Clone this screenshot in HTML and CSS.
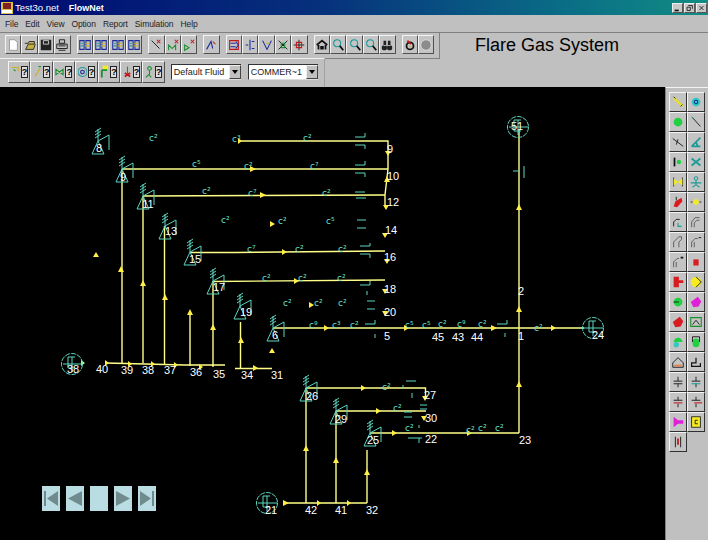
FILE: index.html
```html
<!DOCTYPE html>
<html lang="en">
<head>
<meta charset="utf-8">
<title>Flare Gas System</title>
<link rel="stylesheet" href="styles.css">
</head>
<body>
<div class="app">
  <header class="titlebar">
    <svg class="app-icon" viewBox="0 0 12 12"><rect width="12" height="12" fill="#d8c040"/><rect x="2" y="1" width="8" height="6" fill="#802020"/><rect x="1" y="8" width="10" height="3" fill="#fff"/></svg>
    <span class="doc-name">Test3o.net</span><span class="app-name">FlowNet</span>
    <div class="win-btns">
      <span class="win-btn"><svg viewBox="0 0 11 9"><path class="k2" d="M2 7.500h5"/></svg></span>
      <span class="win-btn"><svg viewBox="0 0 11 9"><path class="k1" d="M4 1.500h5v4M2.500 3.500h4v4h-4z"/></svg></span>
      <span class="win-btn"><svg viewBox="0 0 11 9"><path class="k1" d="M3 2l5 5M8 2l-5 5"/></svg></span>
    </div>
  </header>
  <nav class="menubar">
    <span>File</span><span>Edit</span><span>View</span><span>Option</span><span>Report</span><span>Simulation</span><span>Help</span>
  </nav>
  <div class="row-one">
    <div class="toolbar">
      <div class="tb-group">
        <span class="tb"><svg viewBox="0 0 16 16"><path class="paper" d="M4 2h6l3 3v9H4z"/></svg></span>
        <span class="tb"><svg viewBox="0 0 16 16"><path class="folder" d="M2 6h4l1-2h6v3H6l-3 6h9l2-6"/></svg></span>
        <span class="tb"><svg viewBox="0 0 16 16"><path class="disk" d="M2 2h12v12H2z"/><path class="w" d="M5 3h6v4H5z"/></svg></span>
        <span class="tb"><svg viewBox="0 0 16 16"><path class="k1" d="M5 2h6v4H5zM2 7h12v5H2zM4 14h8M4 9h8"/></svg></span>
      </div>
      <div class="tb-group">
        <span class="tb"><svg viewBox="0 0 16 16"><use href="#book"/></svg></span>
        <span class="tb"><svg viewBox="0 0 16 16"><use href="#book"/></svg></span>
        <span class="tb"><svg viewBox="0 0 16 16"><use href="#book"/></svg></span>
        <span class="tb"><svg viewBox="0 0 16 16"><use href="#book"/></svg></span>
      </div>
      <div class="tb-group">
        <span class="tb"><svg viewBox="0 0 16 16"><path class="k1" d="M3 3l9 9"/><path class="r1" d="M9 2l4 4M13 2L9 6"/></svg></span>
        <span class="tb"><svg viewBox="0 0 16 16"><path class="g1" d="M3 14V8l4 4 4-4v6"/><path class="r1" d="M10 2l4 4M14 2l-4 4"/></svg></span>
        <span class="tb"><svg viewBox="0 0 16 16"><path class="g1" d="M3 8v6l5-3z"/><path class="r1" d="M10 2l4 4M14 2l-4 4"/></svg></span>
      </div>
      <div class="tb-group">
        <span class="tb"><svg viewBox="0 0 16 16"><path class="b1" d="M3 13L8 4l2 8"/><path class="r1" d="M10 4l3 3"/></svg></span>
      </div>
      <div class="tb-group">
        <span class="tb"><svg viewBox="0 0 16 16"><path class="r1" d="M3 3h10v10H3z"/><path class="b1" d="M4 6h6M4 10h6M10 4l3 4-3 4"/></svg></span>
        <span class="tb"><svg viewBox="0 0 16 16"><path class="b1" d="M8 2v12M3 8h3M10 4h3M10 12h3"/></svg></span>
        <span class="tb"><svg viewBox="0 0 16 16"><path class="b1" d="M3 3l5 10 5-10"/><path class="y1" d="M7 6h4"/></svg></span>
        <span class="tb"><svg viewBox="0 0 16 16"><path class="k1" d="M3 3l10 10M13 3L3 13"/><path class="g1" d="M6 6h4v5H6z"/></svg></span>
        <span class="tb"><svg viewBox="0 0 16 16"><path class="k1" d="M8 2v12M2 8h12"/><path class="r1" d="M5 5h6v6H5z"/></svg></span>
      </div>
      <div class="tb-group">
        <span class="tb"><svg viewBox="0 0 16 16"><path class="k2" d="M2 8l6-5 6 5M4 13V8M12 13V8M7 13v-3h2v3"/></svg></span>
        <span class="tb"><svg viewBox="0 0 16 16"><use href="#lens"/></svg></span>
        <span class="tb"><svg viewBox="0 0 16 16"><use href="#lens"/></svg></span>
        <span class="tb"><svg viewBox="0 0 16 16"><use href="#lens"/></svg></span>
        <span class="tb"><svg viewBox="0 0 16 16"><path class="disk" d="M2 11a3 3 0 1 0 6 0 3 3 0 1 0-6 0zM8 11a3 3 0 1 0 6 0 3 3 0 1 0-6 0zM4 3h3v6H4zM9 3h3v6H9z"/></svg></span>
      </div>
      <div class="tb-group">
        <span class="tb"><svg viewBox="0 0 16 16"><circle class="k2" cx="8" cy="9" r="4"/><path class="r2" d="M5 3l4 4"/><path class="y1" d="M7 10h3"/></svg></span>
        <span class="tb"><svg viewBox="0 0 16 16"><circle class="grey-dot" cx="8" cy="8" r="6"/></svg></span>
      </div>
    </div>
    <h1 class="doc-title">Flare Gas System</h1>
  </div>
  <div class="row-two">
    <div class="toolbar-two">
      <span class="tb2"><svg viewBox="0 0 10 16"><path class="y1" d="M1 3h7v4"/><path class="g1" d="M3 5l2 2"/></svg><b>?</b></span>
      <span class="tb2"><svg viewBox="0 0 10 16"><path class="y1" d="M2 13L8 4"/><path class="g1" d="M6 2h3"/></svg><b>?</b></span>
      <span class="tb2"><svg viewBox="0 0 10 16"><path class="g1" d="M1 5v6l8-6v6z"/></svg><b>?</b></span>
      <span class="tb2"><svg viewBox="0 0 10 16"><circle class="t1" cx="5" cy="8" r="5"/><circle class="b1" cx="5" cy="8" r="2"/></svg><b>?</b></span>
      <span class="tb2"><svg viewBox="0 0 10 16"><path class="fill-y" d="M3 1h6v5H3z"/><path class="g2" d="M2 6h6M2 6v8"/></svg><b>?</b></span>
      <span class="tb2"><svg viewBox="0 0 10 16"><path class="r2" d="M2 13l6-4M2 9l6 4"/><path class="g1" d="M5 2v8"/></svg><b>?</b></span>
      <span class="tb2"><svg viewBox="0 0 10 16"><circle class="g1" cx="5" cy="4" r="2"/><path class="g1" d="M5 6v5M1 14l3-3 3 3"/></svg><b>?</b></span>
      <div class="combo combo-first"><span class="combo-text">Default Fluid</span><span class="combo-arrow"></span></div>
      <div class="combo"><span class="combo-text">COMMER~1</span><span class="combo-arrow"></span></div>
    </div>
  </div>
  <main class="workspace">
    <div class="canvas">
      <svg class="flow" viewBox="0 87 664 453" aria-label="Flare gas network diagram">
        <defs>
          <g id="book"><path class="b1" d="M2 3h5v10H2zM9 3h5v10H9z"/><path class="y1" d="M8 6h5M8 9h5"/><path class="t1" d="M3 6h3M3 9h3"/></g>
          <g id="lens"><circle class="t1" cx="7" cy="6" r="4"/><path class="k2" d="M10 9l4 5"/></g>
          <g id="flare"><path d="M0 0L-6 13H6ZM0 0L11-6V9M0 0V-12M-3-9L3-13M-3-6L3-10M-3-3L3-7"/></g>
          <g id="tank"><circle r="10.500" stroke-dasharray="5 1"/><path d="M3-7H-4V4H3M-9 0H10M0-7V8"/></g>
        </defs>
        <g class="pipes">
          <path d="M240 141H388V169L385 195V207"/>
          <path d="M122 169H388M143 196L385 195M190 252.500H236L385 251M213 281.500L385 280"/>
          <path d="M122 169V363M143 196V363M164.500 226V364M190 311V366M213 281V367M240.500 322V368"/>
          <path d="M106 363L184 365H225M235 368.500H272"/>
          <path d="M273 328H584M519 130V433"/>
          <path d="M306 388H425.500V397M336 411H426M370 433H519"/>
          <path d="M306 388V503M336 411V503M367 450V503M283 503H367"/>
        </g>
        <path class="marks" d="M250 166l6 3-6 3zM260 192l6 3-6 3zM238 138l4 3-4 3zM282 249l5 3-5 3zM294 278l5 3-5 3zM324 325l5 3-5 3zM404 325l5 3-5 3zM491 325l6 3-6 3zM551 325l5 3-5 3zM361 385l5 3-5 3zM376 408l5 3-5 3zM392 430l5 3-5 3zM467 430l5 3-5 3zM283 500l6 3-6 3zM317 500l4 3-4 3zM347 500l4 3-4 3zM105 360l4 3-4 3zM128 361l4 3-4 3zM151 361l4 3-4 3zM174 362l4 3-4 3zM199 364l4 3-4 3zM253 365l5 3-5 3zM81 360l4 3-4 3zM270 221l5 3-5 3zM309 302l5 3-5 3z"/>
        <path class="marks" d="M118 272l3-6 3 6zM140 286l3-6 3 6zM162 300l3-6 3 6zM187 315l3-6 3 6zM210 330l3-6 3 6zM238 343l3-6 3 6zM93 257l3-5 3 5zM269 353l3-5 3 5zM516 210l3-6 3 6zM516 312l3-6 3 6zM516 387l3-6 3 6zM303 451l3-6 3 6zM333 463l3-6 3 6zM364 475l3-6 3 6zM384 182l3-6 3 6z"/>
        <path class="marks" d="M385 151h6l-3 5zM383 205h6l-3 5zM382 233h6l-3 5zM384 259h6l-3 5zM382 289h6l-3 5zM382 311h6l-3 5zM422 396h6l-3 5zM421 416h6l-3 5z"/>
        <g class="teal">
          <use href="#flare" x="98" y="141"/><use href="#flare" x="122" y="169"/><use href="#flare" x="143" y="196"/><use href="#flare" x="165" y="226"/><use href="#flare" x="190" y="252"/><use href="#flare" x="213" y="281"/><use href="#flare" x="240" y="306"/><use href="#flare" x="273" y="328"/><use href="#flare" x="306" y="388"/><use href="#flare" x="336" y="411"/><use href="#flare" x="370" y="433"/>
          <use href="#tank" x="518" y="127"/><use href="#tank" x="72" y="364"/><use href="#tank" x="593" y="328"/><use href="#tank" x="267" y="503"/>
          <path d="M355 137H365V133M355 145H365V149M355 165H365V161M355 173H365V177M355 192H365M356 198H366M357 220H366M357 228H366M360 246H370V243M360 254H370V258M360 285H370V281M367 291V295M367 301H375M367 309H375M365 324H375V320M375 334V338M497 324H507V320M505 333V337M513 171H519M524 166V178M412 398V393M404 412H412M404 417H412M406 381H416M420 409H427M420 405H427M408 438H422M419 425V428M419 438V443M403 385V389"/>
        </g>
        <g class="tags">
          <text x="149" y="141">c²</text><text x="192" y="167">c⁵</text><text x="202" y="194">c²</text><text x="221" y="223">c²</text><text x="232" y="142">c³</text><text x="303" y="141">c²</text>
          <text x="244" y="169">c²</text><text x="310" y="169">c⁷</text><text x="248" y="196">c⁷</text><text x="322" y="196">c²</text><text x="278" y="224">c²</text><text x="326" y="224">c⁵</text>
          <text x="247" y="252">c⁷</text><text x="295" y="252">c²</text><text x="338" y="252">c²</text><text x="262" y="281">c²</text><text x="298" y="281">c²</text><text x="337" y="281">c²</text>
          <text x="283" y="306">c²</text><text x="314" y="306">c²</text><text x="338" y="306">c²</text><text x="309" y="328">c⁹</text><text x="332" y="328">c³</text><text x="350" y="328">c²</text>
          <text x="405" y="328">c⁵</text><text x="422" y="328">c⁵</text><text x="438" y="327">c²</text><text x="457" y="327">c⁹</text><text x="478" y="327">c²</text><text x="534" y="331">c²</text>
          <text x="382" y="390">c²</text><text x="393" y="411">c²</text><text x="405" y="431">c²</text><text x="466" y="433">c²</text><text x="478" y="431">c²</text><text x="495" y="431">c²</text>
        </g>
        <g class="labels">
          <text x="390" y="153">9</text><text x="393" y="180">10</text><text x="393" y="206">12</text><text x="391" y="234">14</text><text x="390" y="261">16</text><text x="390" y="293">18</text><text x="390" y="316">20</text><text x="387" y="340">5</text>
          <text x="438" y="341">45</text><text x="458" y="341">43</text><text x="477" y="341">44</text><text x="521" y="340">1</text><text x="521" y="295">2</text><text x="598" y="339">24</text><text x="525" y="444">23</text><text x="431" y="443">22</text><text x="430" y="399">27</text><text x="431" y="422">30</text>
          <text x="277" y="379">31</text><text x="247" y="379">34</text><text x="219" y="378">35</text><text x="196" y="376">36</text><text x="170" y="374">37</text><text x="148" y="374">38</text><text x="127" y="374">39</text><text x="102" y="373">40</text>
          <text x="311" y="514">42</text><text x="341" y="514">41</text><text x="372" y="514">32</text>
          <text x="99" y="152">8</text><text x="123" y="181">9</text><text x="148" y="208">11</text><text x="171" y="235">13</text><text x="195" y="263">15</text><text x="219" y="291">17</text><text x="246" y="316">19</text><text x="275" y="339">6</text><text x="312" y="400">26</text><text x="341" y="423">29</text><text x="373" y="444">25</text>
          <text x="517" y="130">51</text><text x="73" y="373">38</text><text x="271" y="514">21</text>
        </g>
      </svg>
      <div class="player">
        <span class="nav"><svg viewBox="0 0 18 25"><path class="nav-ink" d="M2 5h2v15H2zM16 5v15L5 12.500z"/></svg></span>
        <span class="nav"><svg viewBox="0 0 18 25"><path class="nav-ink" d="M16 5v15L2 12.500z"/></svg></span>
        <span class="nav"></span>
        <span class="nav"><svg viewBox="0 0 18 25"><path class="nav-ink" d="M2 5v15l14-7.500z"/></svg></span>
        <span class="nav"><svg viewBox="0 0 18 25"><path class="nav-ink" d="M14 5h2v15h-2zM2 5v15l11-7.500z"/></svg></span>
      </div>
    </div>
    <aside class="palette">
      <span class="pb"><svg viewBox="0 0 16 16"><path class="y2" d="M3 3l10 10"/><path class="k1" d="M3 2l2 2M11 13l2-2"/></svg></span>
      <span class="pb"><svg viewBox="0 0 16 16"><circle class="fill-t" cx="8" cy="8" r="5"/><circle class="b1" cx="8" cy="8" r="2"/></svg></span>
      <span class="pb"><svg viewBox="0 0 16 16"><circle class="fill-g" cx="8" cy="8" r="5"/></svg></span>
      <span class="pb"><svg viewBox="0 0 16 16"><path class="k1" d="M4 3l9 10"/><path class="t1" d="M3 2l2 2"/></svg></span>
      <span class="pb"><svg viewBox="0 0 16 16"><path class="k1" d="M2 4l12 9M8 5l-2 6"/></svg></span>
      <span class="pb"><svg viewBox="0 0 16 16"><path class="t2" d="M3 13h10M3 13l5-5 2 5M8 8l5-5"/></svg></span>
      <span class="pb"><svg viewBox="0 0 16 16"><path class="k2" d="M4 3v10"/><circle class="fill-g" cx="9" cy="8" r="2.500"/></svg></span>
      <span class="pb"><svg viewBox="0 0 16 16"><path class="t2" d="M3 4l10 8M13 4L3 12"/></svg></span>
      <span class="pb"><svg viewBox="0 0 16 16"><path class="k1" d="M3 3v10M13 3v10"/><path class="fill-y" d="M3 4l10 8V4L3 12z"/></svg></span>
      <span class="pb"><svg viewBox="0 0 16 16"><circle class="t1" cx="8" cy="4" r="2"/><path class="t1" d="M8 6v6M2 9h12M4 14l4-3 4 3"/></svg></span>
      <span class="pb"><svg viewBox="0 0 16 16"><path class="fill-r" d="M3 13l2-6 7-4 1 4-6 7z"/><path class="k1" d="M6 2v4"/></svg></span>
      <span class="pb"><svg viewBox="0 0 16 16"><path class="fill-y" d="M8 4l4 4-4 4-4-4z"/><path class="k1" d="M2 8h2M12 8h2"/></svg></span>
      <span class="pb"><svg viewBox="0 0 16 16"><path class="k1" d="M3 13V8l3-3h4"/><path class="t1" d="M8 9v4h4"/></svg></span>
      <span class="pb"><svg viewBox="0 0 16 16"><path class="gr1" d="M3 14V8l4-5h5M6 14V9l3-3h3"/></svg></span>
      <span class="pb"><svg viewBox="0 0 16 16"><path class="gr1" d="M3 14V8l6-6h3v3l-3 3v6"/></svg></span>
      <span class="pb"><svg viewBox="0 0 16 16"><path class="gr1" d="M3 14V8l4-4h3M6 14V8"/><path class="k1" d="M11 3h3"/></svg></span>
      <span class="pb"><svg viewBox="0 0 16 16"><path class="gr1" d="M3 14V8l4-4h2M6 14V8"/><path class="k2" d="M11 3h3"/></svg></span>
      <span class="pb"><svg viewBox="0 0 16 16"><rect class="fill-r" x="5" y="5" width="6" height="7"/></svg></span>
      <span class="pb"><svg viewBox="0 0 16 16"><path class="fill-r" d="M3 2h6v4h5v3H9v5H3z"/></svg></span>
      <span class="pb"><svg viewBox="0 0 16 16"><circle class="fill-y" cx="8" cy="8" r="6"/><path class="k1" d="M8 2l6 6-6 6"/></svg></span>
      <span class="pb"><svg viewBox="0 0 16 16"><circle class="fill-g" cx="8" cy="8" r="5"/><path class="k1" d="M3 8h6"/></svg></span>
      <span class="pb"><svg viewBox="0 0 16 16"><path class="fill-m" d="M2 8l8-6 4 5-3 6-6 1z"/></svg></span>
      <span class="pb"><svg viewBox="0 0 16 16"><path class="fill-r" d="M2 8l8-6 4 5-3 6-6 1z"/></svg></span>
      <span class="pb"><svg viewBox="0 0 16 16"><path class="g1" d="M2 3h12v10H2z"/><path class="k1" d="M4 11l4-5 4 5"/></svg></span>
      <span class="pb"><svg viewBox="0 0 16 16"><path class="fill-g" d="M3 8a5 5 0 0 1 10 0z"/><circle class="fill-t" cx="6" cy="11" r="3"/></svg></span>
      <span class="pb"><svg viewBox="0 0 16 16"><ellipse class="fill-g" cx="8" cy="9" rx="4" ry="5"/><path class="k1" d="M4 2v6M12 2v6M4 2h8"/></svg></span>
      <span class="pb"><svg viewBox="0 0 16 16"><path class="k1" d="M2 14V9l6-6 6 6v5z"/><path class="fill-o" d="M4 13v-2h8v2z"/></svg></span>
      <span class="pb"><svg viewBox="0 0 16 16"><path class="k1 wide" d="M8 3v6H3v4h10V9"/></svg></span>
      <span class="pb"><svg viewBox="0 0 16 16"><path class="k1" d="M8 2v5M8 10v4M3 7h10M3 10h10"/></svg></span>
      <span class="pb"><svg viewBox="0 0 16 16"><path class="k1" d="M8 2v5M8 10v4M3 7h10"/><path class="t1" d="M3 10h10"/></svg></span>
      <span class="pb"><svg viewBox="0 0 16 16"><path class="k1" d="M8 2v4M8 10v4M3 6h10"/><path class="r1" d="M3 9h10"/></svg></span>
      <span class="pb"><svg viewBox="0 0 16 16"><path class="k1" d="M8 2v4M8 10v4M3 6h10"/><path class="r1" d="M6 9h9"/></svg></span>
      <span class="pb"><svg viewBox="0 0 16 16"><path class="fill-m" d="M3 2l5 4h6v4H8l-5 4z"/></svg></span>
      <span class="pb"><svg viewBox="0 0 16 16"><rect class="fill-y line" x="3" y="2" width="10" height="12"/><path class="k1" d="M10 6H7v4h3"/></svg></span>
      <span class="pb"><svg viewBox="0 0 16 16"><path class="k1" d="M5 2v12"/><path class="r2" d="M8 4v7"/><path class="k1" d="M11 2v12"/></svg></span>
    </aside>
  </main>
</div>
</body>
</html>
```
FILE: styles.css
```css
* { box-sizing: border-box; }
html, body { margin: 0; height: 100%; background: #fff; overflow: hidden; }
body { font-family: "Liberation Sans", Arial, sans-serif; }
svg { display: block; }

.app { width: 708px; height: 540px; display: flex; flex-direction: column; background: #c0c0c0; }

.titlebar { height: 15px; flex: none; display: flex; align-items: center; padding: 0 1px; color: #fff; background: linear-gradient(90deg, #000a72 0%, #06307c 45%, #0a6e86 80%, #128c84 100%); font-size: 9.500px; }
.app-icon { width: 12px; height: 12px; margin-right: 2px; }
.doc-name { margin-right: 10px; }
.app-name { font-weight: 700; font-size: 9px; }
.win-btns { margin-left: auto; display: flex; gap: 1px; }
.win-btn { width: 11px; height: 10px; background: #c8c8c8; border: 1px solid; border-color: #eee #555 #555 #eee; display: block; }
.win-btn svg { width: 9px; height: 8px; }

.menubar { height: 17px; flex: none; display: flex; align-items: center; gap: 7px; padding-left: 5px; font-size: 8.500px; color: #222; letter-spacing: -.1px; }

.row-one { height: 26px; flex: none; display: flex; border-top: 1px solid #808080; }
.toolbar { width: 440px; height: 26px; flex: none; display: flex; gap: 6px; padding: 2px 0 0 5px; border-bottom: 1px solid #808080; border-right: 1px solid #808080; }
.tb-group { display: flex; height: 19px; }
.tb { width: 16.400px; height: 19px; border: 1px solid; border-color: #f4f4f4 #505050 #505050 #f4f4f4; background: #c4c4c4; display: flex; align-items: center; justify-content: center; }
.tb svg { width: 14px; height: 14px; }
.doc-title { margin: 0 0 0 35px; font-size: 18px; line-height: 25px; font-weight: 400; color: #000; white-space: nowrap; }

.row-two { height: 29px; flex: none; }
.toolbar-two { width: 325px; height: 29px; display: flex; align-items: center; padding: 0 0 3px 8px; border-top: 1px solid #f0f0f0; border-right: 1px solid #a0a0a0; }
.tb2 { width: 22.400px; height: 22px; flex: none; border: 1px solid; border-color: #f4f4f4 #505050 #505050 #f4f4f4; display: flex; align-items: center; justify-content: center; gap: 1px; }
.tb2 svg { width: 9px; height: 16px; }
.tb2 b { width: 7px; height: 12px; border: 1px solid #222; background: #ddd; color: #000; font-size: 9px; line-height: 10px; text-align: center; font-weight: 700; display: block; }
.combo { width: 70px; height: 16px; flex: none; margin-left: 7px; display: flex; align-items: center; background: #fff; border-top: 1px solid #333; border-left: 1px solid #333; border-bottom: 1px solid #ddd; }
.combo-first { margin-left: 6px; }
.combo-text { flex: 1; font-size: 9px; padding-left: 2px; color: #222; white-space: nowrap; overflow: hidden; }
.combo-arrow { width: 12px; height: 14px; background: #c0c0c0; border: 1px solid; border-color: #eee #444 #444 #eee; position: relative; }
.combo-arrow::after { content: ""; position: absolute; left: 2px; top: 4px; border: 3px solid transparent; border-top: 4px solid #000; border-bottom: 0; }

.workspace { flex: 1; display: flex; min-height: 0; }
.canvas { width: 665px; flex: none; background: #000; position: relative; }
.flow { width: 664px; height: 453px; }
.pipes path { fill: none; stroke: #ffff88; stroke-width: 1.400; }
.marks { fill: #ffee44; }
.teal { fill: none; stroke: #5cd8c2; stroke-width: 1; }
.tags text { font: 9px "DejaVu Sans", sans-serif; fill: #66e0cc; }
.labels text { font: 11px "Liberation Sans", sans-serif; fill: #fff; text-anchor: middle; }

.player { position: absolute; left: 42px; top: 399px; display: flex; gap: 6px; }
.nav { width: 18px; height: 25px; background: #b9dde3; display: block; }
.nav svg { width: 18px; height: 25px; }
.nav-ink { fill: #6f8b8e; }

.palette { flex: 1; border-top: 1px solid #f4f4f4; border-left: 1px solid #808080; padding: 4px 3px 0; display: grid; grid-template-columns: 18px 18px; grid-auto-rows: 20px; align-content: start; }
.pb { border: 1px solid; border-color: #f4f4f4 #303030 #303030 #f4f4f4; display: flex; align-items: center; justify-content: center; background: #c4c4c4; }
.pb svg { width: 14px; height: 14px; }

.k1, .k2, .r1, .r2, .g1, .g2, .b1, .y1, .y2, .t1, .t2, .gr1, .w { fill: none; }
.k1 { stroke: #111; stroke-width: 1; }
.wide { stroke-width: 1.400; }
.k2 { stroke: #111; stroke-width: 2; }
.r1 { stroke: #c01818; stroke-width: 1.200; }
.r2 { stroke: #c01818; stroke-width: 2; }
.g1 { stroke: #18902c; stroke-width: 1.200; }
.g2 { stroke: #18902c; stroke-width: 2; }
.b1 { stroke: #1a2a9c; stroke-width: 1.200; }
.y1 { stroke: #c8b020; stroke-width: 1.200; }
.y2 { stroke: #e8e020; stroke-width: 2.500; }
.t1 { stroke: #1a9a98; stroke-width: 1.200; }
.t2 { stroke: #1a9a98; stroke-width: 2; }
.gr1 { stroke: #555; stroke-width: 1; }
.w { stroke: #ddd; }
.paper { fill: #fff; stroke: #666; stroke-width: .6; }
.folder { fill: #c8b040; stroke: #222; stroke-width: 1; }
.disk { fill: #222; }
.grey-dot { fill: #8c8c8c; stroke: #ddd; }
.fill-y { fill: #f4ec20; }
.fill-g { fill: #20d040; }
.fill-t { fill: #30c8c0; }
.fill-r { fill: #d81c20; }
.fill-m { fill: #e020d8; }
.fill-o { fill: #e88040; }
.line { stroke: #222; }
```
